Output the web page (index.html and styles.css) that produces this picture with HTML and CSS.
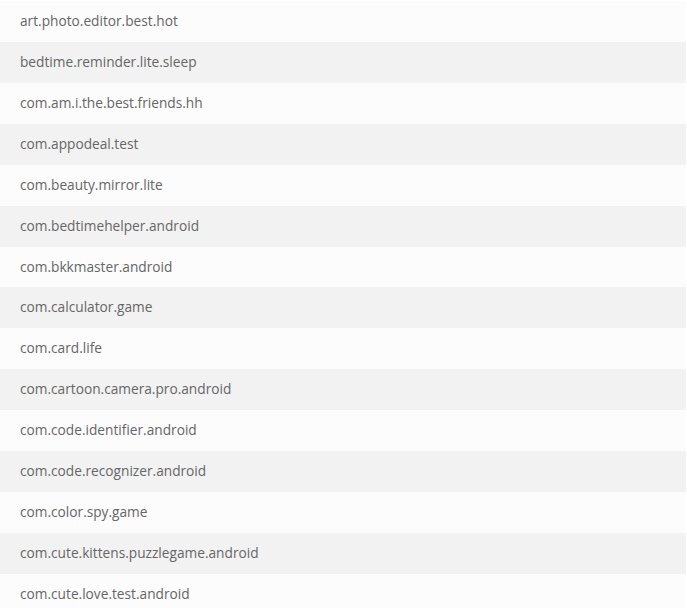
FILE: index.html
```html
<!DOCTYPE html>
<html lang="en">
<head>
  <meta charset="UTF-8">
  <meta name="viewport" content="width=device-width, initial-scale=1.0">
  <title>Packages</title>
  <link rel="stylesheet" href="styles.css">
</head>
<body>
  <ul class="package-list">
    <li>art.photo.editor.best.hot</li>
    <li>bedtime.reminder.lite.sleep</li>
    <li>com.am.i.the.best.friends.hh</li>
    <li>com.appodeal.test</li>
    <li>com.beauty.mirror.lite</li>
    <li>com.bedtimehelper.android</li>
    <li>com.bkkmaster.android</li>
    <li>com.calculator.game</li>
    <li>com.card.life</li>
    <li>com.cartoon.camera.pro.android</li>
    <li>com.code.identifier.android</li>
    <li>com.code.recognizer.android</li>
    <li>com.color.spy.game</li>
    <li>com.cute.kittens.puzzlegame.android</li>
    <li>com.cute.love.test.android</li>
  </ul>
</body>
</html>
```

FILE: styles.css
```css
:root {
  --row-odd: #fcfcfc;
  --row-even: #f2f2f2;
  --text-main: #666666;
}

* {
  box-sizing: border-box;
  margin: 0;
  padding: 0;
}

body {
  font-family: "Open Sans", "Liberation Sans", sans-serif;
  background-color: #ffffff;
  color: var(--text-main);
  padding: 1px 1px 0 0;
}

.package-list {
  list-style: none;
}

.package-list li {
  height: 40.93px;
  line-height: 40px;
  padding: 0 20px;
  font-size: 13.7px;
  background-color: var(--row-odd);
}

.package-list li:nth-child(even) {
  background-color: var(--row-even);
}
```
